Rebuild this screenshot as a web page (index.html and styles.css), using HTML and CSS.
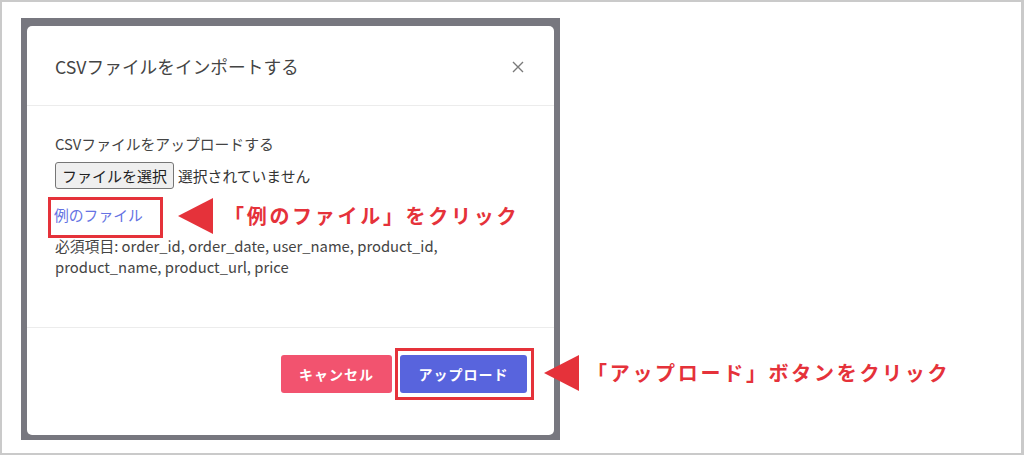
FILE: index.html
```html
<!DOCTYPE html>
<html lang="ja">
<head>
<meta charset="utf-8">
<link rel="stylesheet" href="styles.css">
</head>
<body>
<div class="frame">
  <div class="backdrop">
    <div class="modal">
      <div class="modal-header">
        <h2 class="modal-title">CSVファイルをインポートする</h2>
        <svg class="close" width="12" height="12" viewBox="0 0 12 12"><path d="M1 1 L11 11 M11 1 L1 11" stroke="#7a7a7a" stroke-width="1.4" fill="none"/></svg>
      </div>
      <div class="modal-body">
        <div class="label">CSVファイルをアップロードする</div>
        <div class="file-row">
          <span class="file-btn">ファイルを選択</span>
          <span class="file-none">選択されていません</span>
        </div>
        <a class="sample-link">例のファイル</a>
        <p class="required">必須項目: order_id, order_date, user_name, product_id, product_name, product_url, price</p>
      </div>
      <div class="modal-footer">
        <span class="btn btn-cancel">キャンセル</span>
        <span class="btn btn-upload">アップロード</span>
      </div>
    </div>
  </div>

  <div class="mark mark-link"></div>
  <div class="arrow arrow-1"></div>
  <div class="note note-1">「例のファイル」をクリック</div>

  <div class="mark mark-upload"></div>
  <div class="arrow arrow-2"></div>
  <div class="note note-2">「アップロード」ボタンをクリック</div>
</div>
</body>
</html>
```
FILE: styles.css
```css
* { box-sizing: border-box; }
html, body { margin: 0; padding: 0; background: #fff; }
body { font-family: "Noto Sans CJK JP", "Noto Sans", sans-serif; color: #444; }

.frame {
  position: relative;
  width: 1024px;
  height: 455px;
  border: 2px solid #cacaca;
  border-right-width: 3px;
  padding: 16px 0 0 19px;
  background: #fff;
}

.backdrop {
  width: 539px;
  height: 422px;
  background: #77777f;
  padding: 8px 6px 5px 6px;
}

.modal {
  height: 100%;
  background: #fff;
  border-radius: 5px;
  display: flex;
  flex-direction: column;
}

.modal-header {
  height: 80px;
  border-bottom: 1px solid #ececec;
  padding: 2px 30px 0 28px;
  display: flex;
  align-items: center;
  justify-content: space-between;
}
.modal-title {
  margin: 0;
  font-size: 17.7px;
  font-weight: 400;
  color: #444;
  line-height: 1.3;
}
.close { display: block; }

.modal-body {
  flex: 1;
  padding: 27px 28px 0 28px;
  font-size: 14.8px;
  line-height: 21px;
}
.label { line-height: 22px; }
.file-row {
  margin-top: 7px;
  display: flex;
  align-items: center;
  gap: 4px;
}
.file-btn {
  display: inline-flex;
  align-items: center;
  height: 27px;
  padding: 0 6px;
  background: #efefef;
  border: 1px solid #767676;
  border-radius: 3px;
  color: #222;
  font-size: 15px;
}
.file-none { color: #333; }
.sample-link {
  display: block;
  margin-top: 15px;
  margin-left: -1px;
  color: #6673e3;
  line-height: 22px;
}
.required {
  margin: 9px 0 0 0;
  line-height: 21px;
  color: #444;
}

.modal-footer {
  height: 108px;
  border-top: 1px solid #ececec;
  padding: 27px 27px 0 0;
  display: flex;
  justify-content: flex-end;
  align-items: flex-start;
  gap: 8px;
}
.btn {
  height: 38px;
  display: inline-flex;
  align-items: center;
  justify-content: center;
  border-radius: 3px;
  color: #fff;
  font-weight: 700;
  font-size: 14px;
  letter-spacing: 1px;
}
.btn-cancel { width: 111px; background: #f2536f; }
.btn-upload { width: 127px; background: #5864dd; }

/* annotations overlay */
.mark {
  position: absolute;
  border: 3px solid #e5323a;
}
.mark-link { left: 46px; top: 195px; width: 115px; height: 41px; }
.mark-upload { left: 393px; top: 346px; width: 139px; height: 52px; }

.arrow {
  position: absolute;
  width: 0;
  height: 0;
  border-top: 18px solid transparent;
  border-bottom: 18px solid transparent;
  border-right: 35px solid #e5323a;
}
.arrow-1 { left: 176px; top: 196px; }
.arrow-2 { left: 542px; top: 353px; }

.note {
  position: absolute;
  color: #e5323a;
  font-weight: 700;
  font-size: 20px;
  letter-spacing: 2.7px;
  line-height: 28px;
  white-space: nowrap;
}
.note-1 { left: 222px; top: 200px; }
.note-2 { left: 585px; top: 357px; }
```
